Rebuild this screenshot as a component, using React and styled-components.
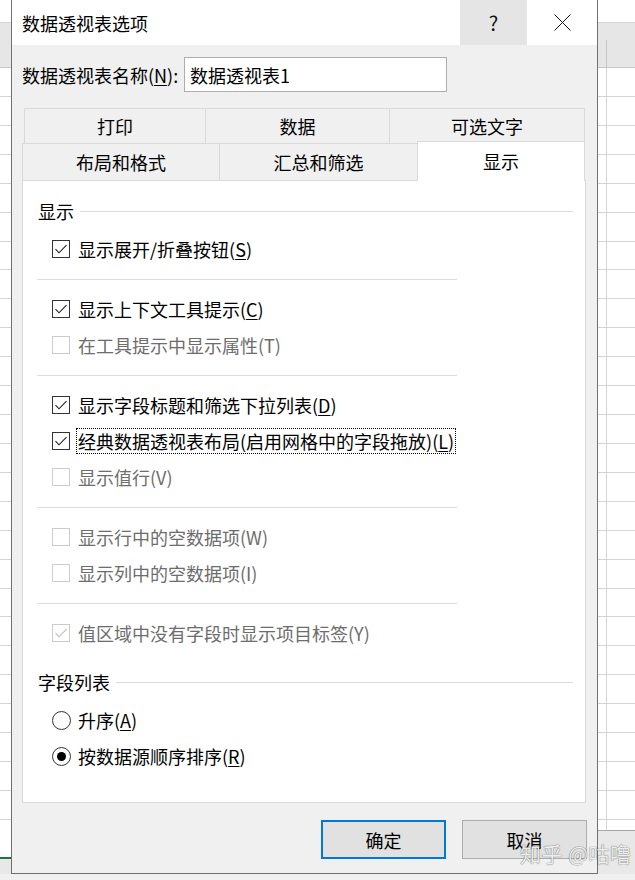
import React from "react";
import styled, { createGlobalStyle } from "styled-components";

const FONT = `"Noto Sans CJK SC", "Noto Sans", sans-serif`;

const GlobalStyle = createGlobalStyle`
  html, body { margin: 0; padding: 0; background: #fff; }
  body { font-family: ${FONT}; }
  #root { width: 635px; height: 880px; }
`;

const Page = styled.div`
  position: relative;
  width: 635px;
  height: 880px;
  overflow: hidden;
  background: #fff;
  font-family: ${FONT};
`;

/* ---------- spreadsheet behind the dialog ---------- */
const Sheet = styled.div`
  position: absolute;
  inset: 0;
  z-index: 0;
`;
const HeaderBand = styled.div`
  position: absolute;
  left: 0;
  right: 0;
  top: 22px;
  height: 44px;
  background: #e6e6e6;
  border-top: 1px solid #d6d6d6;
  border-bottom: 1px solid #c6c6c6;
`;
const HeaderDivider = styled.div`
  position: absolute;
  left: 606px;
  top: 40px;
  width: 1px;
  height: 27px;
  background: #c6c6c6;
`;
const GridRows = styled.div`
  position: absolute;
  left: 0;
  right: 0;
  top: 68px;
  height: 760px;
  background: repeating-linear-gradient(
    to bottom,
    transparent 0,
    transparent 27.92px,
    #d4d4d4 27.92px,
    #d4d4d4 28.92px
  );
`;
const GridCol = styled.div`
  position: absolute;
  left: 606px;
  top: 68px;
  width: 1px;
  height: 762px;
  background: #d4d4d4;
`;
const BottomBand = styled.div`
  position: absolute;
  left: 597px;
  right: 0;
  top: 830px;
  bottom: 0;
  background: #e8e8e8;
  border-top: 1px solid #a8a8a8;
`;
const SheetTabLine = styled.div`
  position: absolute;
  left: 0;
  width: 11px;
  top: 857px;
  height: 2px;
  background: #217346;
`;
const SheetTabArea = styled.div`
  position: absolute;
  left: 0;
  width: 11px;
  top: 859px;
  bottom: 0;
  background: #e8e8e8;
`;
const BottomStrip = styled.div`
  position: absolute;
  left: 0;
  right: 0;
  top: 874px;
  bottom: 0;
  background: #f0f0f0;
`;

/* ---------- dialog ---------- */
const Dialog = styled.div`
  position: relative;
  z-index: 1;
  margin-left: 11px;
  width: 587px;
  height: 874px;
  box-sizing: border-box;
  border: 1px solid #707070;
  border-top: none;
  background: #f0f0f0;
  display: flex;
  flex-direction: column;
  color: #000;
`;
const TitleBar = styled.div`
  height: 45px;
  display: flex;
  background: #fff;
`;
const Title = styled.div`
  flex: 1;
  display: flex;
  align-items: center;
  padding-left: 10px;
  font-size: 18px;
  line-height: 24px;
`;
const CaptionButton = styled.div`
  width: ${(p) => p.$w}px;
  display: flex;
  align-items: center;
  justify-content: center;
  background: ${(p) => p.$bg || "transparent"};
  font-size: 20px;
  color: #111;
`;
const Body = styled.div`
  flex: 1;
  display: flex;
  flex-direction: column;
  padding: 12px 11px 14px 10px;
`;
const NameRow = styled.div`
  display: flex;
  align-items: center;
  height: 35px;
`;
const NameLabel = styled.div`
  width: 162px;
  font-size: 18px;
  line-height: 24px;
  white-space: nowrap;
`;
const NameInput = styled.input`
  width: 263px;
  height: 35px;
  box-sizing: border-box;
  border: 1px solid #adadad;
  padding: 0 5px;
  font-family: ${FONT};
  font-size: 18px;
  color: #000;
  background: #fff;
  outline: none;
`;
const U = styled.span`
  text-decoration: underline;
  text-underline-offset: 2px;
  text-decoration-thickness: 1px;
`;

const TabStrip = styled.div`
  margin-top: 16px;
  display: flex;
  flex-direction: column;
`;
const TabRow = styled.div`
  display: flex;
  align-items: flex-start;
  height: ${(p) => p.$h}px;
  padding-left: ${(p) => p.$indent || 0}px;
`;
const Tab = styled.div`
  width: ${(p) => p.$w}px;
  height: ${(p) => (p.$active ? 40 : "100%")}${(p) => (p.$active ? "px" : "")};
  margin-top: ${(p) => (p.$active ? -2 : 0)}px;
  box-sizing: border-box;
  border-top: 1px solid #d9d9d9;
  border-left: 1px solid #d9d9d9;
  border-right: ${(p) => (p.$last ? "1px solid #d9d9d9" : "none")};
  background: ${(p) => (p.$active ? "#fff" : "#f0f0f0")};
  position: relative;
  z-index: ${(p) => (p.$active ? 2 : 0)};
  display: flex;
  align-items: center;
  justify-content: center;
  padding-bottom: ${(p) => (p.$active ? 2 : 0)}px;
  font-size: 18px;
  line-height: 24px;
`;
const Panel = styled.div`
  height: 623px;
  box-sizing: border-box;
  background: #fff;
  border: 1px solid #d9d9d9;
  padding: 18px 12px 0 15px;
`;
const GroupHeader = styled.div`
  display: flex;
  align-items: center;
  gap: 6px;
  height: 24px;
  margin-top: ${(p) => p.$mt || 0}px;
`;
const GroupTitle = styled.div`
  font-size: 18px;
  line-height: 24px;
`;
const GroupRule = styled.div`
  flex: 1;
  height: 1px;
  background: #dcdcdc;
`;
const Options = styled.div`
  margin-top: 8px;
  padding-left: 14px;
`;
const Separator = styled.div`
  width: 420px;
  height: 1px;
  background: #dcdcdc;
  margin: 12px 0 11px -15px;
`;
const OptionRow = styled.div`
  height: 36px;
  display: flex;
  align-items: center;
  gap: ${(p) => p.$gap || 8}px;
  font-size: 18px;
  line-height: 24px;
  white-space: nowrap;
  color: ${(p) => (p.$disabled ? "#6d6d6d" : "#000")};
`;
const OptionText = styled.span`
  outline: ${(p) => (p.$focus ? "1px dotted #000" : "none")};
  outline-offset: 0px;
  padding: 0 1px;
  margin-left: -1px;
`;
const Box = styled.div`
  width: 18px;
  height: 18px;
  box-sizing: border-box;
  border: 1px solid ${(p) => (p.$disabled ? "#cccccc" : "#333")};
  background: #fff;
  display: flex;
  align-items: center;
  justify-content: center;
  flex: none;
`;
const Radio = styled.div`
  width: 19px;
  height: 19px;
  box-sizing: border-box;
  border-radius: 50%;
  border: 1px solid #333;
  background: #fff;
  display: flex;
  align-items: center;
  justify-content: center;
  flex: none;
`;
const Dot = styled.div`
  width: 9px;
  height: 9px;
  border-radius: 50%;
  background: #000;
`;
const Footer = styled.div`
  margin-top: 17px;
  margin-right: -1px;
  display: flex;
  justify-content: flex-end;
  gap: 16px;
`;
const Button = styled.div`
  width: 125px;
  height: 39px;
  box-sizing: border-box;
  background: #e1e1e1;
  border: ${(p) => (p.$primary ? "2px solid #0078d7" : "1px solid #adadad")};
  display: flex;
  align-items: center;
  justify-content: center;
  font-size: 18px;
  line-height: 24px;
`;
const Watermark = styled.div`
  position: absolute;
  left: 520px;
  top: 839px;
  z-index: 3;
  font-size: 21px;
  line-height: 28px;
  color: rgba(255, 255, 255, 0.92);
  letter-spacing: 0.5px;
  white-space: nowrap;
  text-shadow: 0 0 1px rgba(0, 0, 0, 0.55), 0 0 1px rgba(0, 0, 0, 0.35);
`;

const Check = ({ color }) => (
  <svg width="16" height="16" viewBox="0 0 16 16">
    <polyline
      points="2.5,8.2 6,11.8 13.5,4.2"
      fill="none"
      stroke={color}
      strokeWidth="1.15"
    />
  </svg>
);

const Checkbox = ({ checked, disabled }) => (
  <Box $disabled={disabled}>
    {checked && <Check color={disabled ? "#bdbdbd" : "#222"} />}
  </Box>
);

const label = (text, key) => (
  <>
    {text}(<U>{key}</U>)
  </>
);
const plain = (text, key) => `${text}(${key})`;

const groups = [
  [{ t: label("显示展开/折叠按钮", "S"), checked: true }],
  [
    { t: label("显示上下文工具提示", "C"), checked: true },
    { t: plain("在工具提示中显示属性", "T"), disabled: true },
  ],
  [
    { t: label("显示字段标题和筛选下拉列表", "D"), checked: true },
    { t: label("经典数据透视表布局(启用网格中的字段拖放)", "L"), checked: true, focus: true },
    { t: plain("显示值行", "V"), disabled: true },
  ],
  [
    { t: plain("显示行中的空数据项", "W"), disabled: true },
    { t: plain("显示列中的空数据项", "I"), disabled: true },
  ],
  [{ t: plain("值区域中没有字段时显示项目标签", "Y"), disabled: true, checked: true }],
];

const CloseIcon = () => (
  <svg width="17" height="17" viewBox="0 0 17 17">
    <path d="M0.5 0.5 L16.5 16.5 M16.5 0.5 L0.5 16.5" stroke="#111" strokeWidth="1" fill="none" />
  </svg>
);

export default function App() {
  return (
    <>
      <GlobalStyle />
      <Page>
        <Sheet>
          <HeaderBand />
          <HeaderDivider />
          <GridRows />
          <GridCol />
          <BottomBand />
          <SheetTabLine />
          <SheetTabArea />
          <BottomStrip />
        </Sheet>

        <Dialog>
          <TitleBar>
            <Title>数据透视表选项</Title>
            <CaptionButton $w={67} $bg="#e5e5e5">?</CaptionButton>
            <CaptionButton $w={70}>
              <CloseIcon />
            </CaptionButton>
          </TitleBar>

          <Body>
            <NameRow>
              <NameLabel>
                数据透视表名称(<U>N</U>):
              </NameLabel>
              <NameInput readOnly value="数据透视表1" />
            </NameRow>

            <TabStrip>
              <TabRow $h={35} $indent={2}>
                <Tab $w={181}>打印</Tab>
                <Tab $w={184}>数据</Tab>
                <Tab $w={196} $last>可选文字</Tab>
              </TabRow>
              <TabRow $h={37}>
                <Tab $w={197}>布局和格式</Tab>
                <Tab $w={198}>汇总和筛选</Tab>
                <Tab $w={168} $last $active>显示</Tab>
              </TabRow>
            </TabStrip>

            <Panel>
              <GroupHeader>
                <GroupTitle>显示</GroupTitle>
                <GroupRule />
              </GroupHeader>
              <Options>
                {groups.map((g, gi) => (
                  <React.Fragment key={gi}>
                    {gi > 0 && <Separator />}
                    {g.map((o, oi) => (
                      <OptionRow key={oi} $disabled={o.disabled}>
                        <Checkbox checked={o.checked} disabled={o.disabled} />
                        <OptionText $focus={o.focus}>{o.t}</OptionText>
                      </OptionRow>
                    ))}
                  </React.Fragment>
                ))}
              </Options>

              <GroupHeader $mt={19}>
                <GroupTitle>字段列表</GroupTitle>
                <GroupRule />
              </GroupHeader>
              <Options>
                <OptionRow $gap={7}>
                  <Radio />
                  <OptionText>{label("升序", "A")}</OptionText>
                </OptionRow>
                <OptionRow $gap={7}>
                  <Radio>
                    <Dot />
                  </Radio>
                  <OptionText>{label("按数据源顺序排序", "R")}</OptionText>
                </OptionRow>
              </Options>
            </Panel>

            <Footer>
              <Button $primary>确定</Button>
              <Button>取消</Button>
            </Footer>
          </Body>
        </Dialog>

        <Watermark>知乎 @咕噜</Watermark>
      </Page>
    </>
  );
}
